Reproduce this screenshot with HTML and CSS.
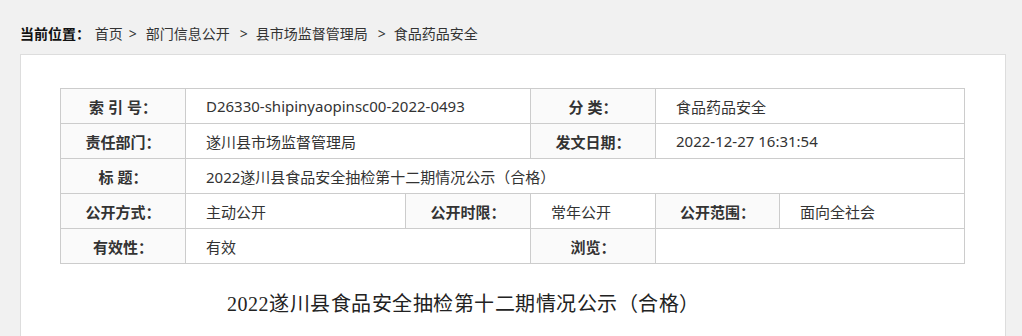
FILE: index.html
```html
<!DOCTYPE html>
<html lang="zh-CN">
<head>
    <meta charset="UTF-8">
    <title>食品药品安全</title>
    <link rel="stylesheet" href="styles.css">
</head>
<body>
    <div class="crumb">
        <span class="crumb-label">当前位置：</span>
        <a href="#">首页</a><span class="sep sep-first">&gt;</span><a href="#">部门信息公开</a><span class="sep">&gt;</span><a href="#">县市场监督管理局</a><span class="sep">&gt;</span><a href="#">食品药品安全</a>
    </div>
    <div class="panel">
        <table class="info-table">
            <colgroup>
                <col style="width:125px">
                <col style="width:220px">
                <col style="width:125px">
                <col style="width:125px">
                <col style="width:124px">
                <col style="width:185px">
            </colgroup>
            <tr>
                <th>索 引 号：</th>
                <td colspan="2">D26330-shipinyaopinsc00-2022-0493</td>
                <th>分 类：</th>
                <td colspan="2">食品药品安全</td>
            </tr>
            <tr>
                <th>责任部门：</th>
                <td colspan="2">遂川县市场监督管理局</td>
                <th>发文日期：</th>
                <td colspan="2">2022-12-27 16:31:54</td>
            </tr>
            <tr>
                <th>标 题：</th>
                <td colspan="5">2022遂川县食品安全抽检第十二期情况公示（合格）</td>
            </tr>
            <tr>
                <th>公开方式：</th>
                <td>主动公开</td>
                <th>公开时限：</th>
                <td>常年公开</td>
                <th>公开范围：</th>
                <td>面向全社会</td>
            </tr>
            <tr>
                <th>有效性：</th>
                <td colspan="2">有效</td>
                <th>浏览：</th>
                <td colspan="2"></td>
            </tr>
        </table>
        <h1 class="doc-title">2022遂川县食品安全抽检第十二期情况公示（合格）</h1>
    </div>
</body>
</html>
```

FILE: styles.css
```css
body{
    margin: 0;
    background-color: #f1f1f1;
    font-family: "Noto Sans", "Noto Sans CJK SC", sans-serif;
    color: #333;
}

a{
    color: #333;
    text-decoration: none;
}

.crumb{
    padding: 24px 0 10px 20px;
    height: 20px;
    line-height: 20px;
    font-size: 14px;
}

.crumb-label{
    font-weight: 700;
    color: #111;
    margin-right: 1px;
}

.sep{
    margin: 0 8px 0 10px;
}

.sep-first{
    margin: 0 9px 0 6px;
}

.panel{
    box-sizing: border-box;
    margin-left: 20px;
    width: 986px;
    height: 290px;
    border: 1px solid #ddd;
    padding: 33px 40px 0 39px;
    background-color: #fff;
}

.info-table{
    border-collapse: collapse;
    table-layout: fixed;
    width: 905px;
    font-size: 15px;
}

.info-table th,
.info-table td{
    height: 34px;
    padding: 0;
    border: 1px solid #ccc;
}

.info-table th{
    font-weight: 700;
    text-align: center;
    background-color: #fafafa;
}

.info-table td{
    padding-left: 20px;
    text-align: left;
}

.doc-title{
    margin: 25px 0 0;
    padding-left: 167px;
    line-height: 30px;
    font-family: "Liberation Serif", serif;
    font-size: 20px;
    font-weight: 400;
    letter-spacing: 0.5px;
    color: #222;
}
```
